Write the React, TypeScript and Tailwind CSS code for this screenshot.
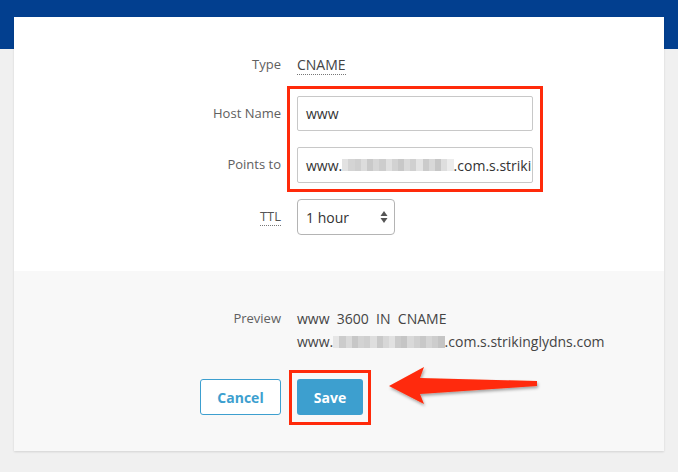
import React from "react";

const blurA = [
  "bg-[#e2e2e2]", "bg-[#d4d4d4]", "bg-[#cfcfcf]", "bg-[#dcdcdc]", "bg-[#c9c9c9]", "bg-[#d6d6d6]",
  "bg-[#cdcdcd]", "bg-[#e0e0e0]", "bg-[#d2d2d2]", "bg-[#c8c8c8]", "bg-[#dadada]", "bg-[#d0d0d0]",
  "bg-[#e4e4e4]", "bg-[#cbcbcb]", "bg-[#d8d8d8]", "bg-[#c6c6c6]", "bg-[#dedede]", "bg-[#ececec]",
];

const blurB = [
  "bg-[#e6e6e6]", "bg-[#cccccc]", "bg-[#dadada]", "bg-[#c7c7c7]", "bg-[#d3d3d3]", "bg-[#cfcfcf]",
  "bg-[#dedede]", "bg-[#c9c9c9]", "bg-[#d7d7d7]", "bg-[#e1e1e1]", "bg-[#cbcbcb]", "bg-[#c5c5c5]",
  "bg-[#d9d9d9]", "bg-[#d0d0d0]", "bg-[#c8c8c8]", "bg-[#d5d5d5]", "bg-[#cdcdcd]", "bg-[#c4c4c4]",
];

function Blur({ cells }: { cells: string[] }) {
  return (
    <span className="inline-flex h-[12px] align-[-1px]">
      {cells.map((c, i) => (
        <span key={i} className={`${c} h-full w-[6.2px]`} />
      ))}
    </span>
  );
}

function Label({ children }: { children: React.ReactNode }) {
  return <div className="w-[267px] shrink-0 text-right text-[13px] text-[#606060]">{children}</div>;
}

export default function App() {
  return (
    <div
      className="relative min-h-[472px] w-[678px] overflow-hidden bg-[#f0f0f0]"
      style={{ fontFamily: '"Open Sans", "Liberation Sans", sans-serif' }}
    >
      <div className="h-[49px] bg-[#023f8f]" />
      <div className="relative mx-[14px] -mt-[32px] bg-white shadow-[0_1px_2px_rgba(0,0,0,0.12)]">
        {/* form fields */}
        <div className="pt-[37px] pb-[36px]">
          <div className="flex h-[22px] items-center gap-4">
            <Label>Type</Label>
            <span className="border-b border-dotted border-[#777] text-[14px] leading-[18px] text-[#444]">CNAME</span>
          </div>

          <div className="relative mt-[20px]">
            <div className="pointer-events-none absolute left-[273px] top-[-10px] h-[106px] w-[256px] border-[3px] border-[#ff2a0a]" />
            <div className="flex items-center gap-4">
              <Label>Host Name</Label>
              <div className="flex h-[35px] w-[236px] items-center rounded-[2px] border border-[#c8c8c8] px-[8px] text-[14px] text-[#333]">
                www
              </div>
            </div>
            <div className="mt-[16px] flex items-center gap-4">
              <Label>Points to</Label>
              <div className="flex h-[36px] w-[236px] items-center overflow-hidden whitespace-nowrap rounded-[2px] border border-[#c8c8c8] px-[8px] text-[14px] text-[#333]">
                www.
                <Blur cells={blurA} />
                .com.s.strikinglydns.com
              </div>
            </div>
          </div>

          <div className="mt-[16px] flex items-center gap-4">
            <Label>
              <span className="border-b border-dotted border-[#777] text-[#555]">TTL</span>
            </Label>
            <div className="flex h-[36px] w-[98px] items-center justify-between rounded-[4px] border border-[#b4b4b4] pl-[8px] pr-[6px] text-[14px] text-[#333]">
              1 hour
              <svg width="8" height="14" viewBox="0 0 8 14">
                <path d="M4 1 L7.5 6 L0.5 6 Z" fill="#555" />
                <path d="M4 13 L7.5 8 L0.5 8 Z" fill="#555" />
              </svg>
            </div>
          </div>
        </div>

        {/* preview & actions */}
        <div className="bg-[#f8f8f8] pt-[36px] pb-[36px]">
          <div className="flex gap-4">
            <Label>
              <span className="leading-[23px]">Preview</span>
            </Label>
            <div className="text-[14px] leading-[23px] text-[#444]">
              <div className="whitespace-pre">www  3600  IN  CNAME</div>
              <div className="whitespace-nowrap">
                www.
                <Blur cells={blurB} />
                .com.s.strikinglydns.com
              </div>
            </div>
          </div>

          <div className="mt-[26px] flex gap-4 pl-[186px]">
            <button className="h-[36px] w-[81px] rounded-[3px] border border-[#3d9fcf] bg-white text-[14px] font-bold text-[#3d9fcf]">
              Cancel
            </button>
            <div className="relative">
              <div className="pointer-events-none absolute -left-[8px] -top-[9px] h-[55px] w-[82px] border-[3px] border-[#ff2a0a]" />
              <button className="h-[36px] w-[66px] rounded-[3px] bg-[#3d9fcf] text-[14px] font-bold text-white">
                Save
              </button>
            </div>
          </div>
        </div>
      </div>

      <svg className="pointer-events-none absolute left-0 top-0" width="678" height="472">
        <defs>
          <filter id="sh" x="-10%" y="-30%" width="130%" height="180%">
            <feDropShadow dx="1" dy="2" stdDeviation="1.5" floodColor="#000" floodOpacity="0.35" />
          </filter>
        </defs>
        <path
          d="M389 386 L424 367 L420 378 L537 381 L537 386 L420 394 L424 404 Z"
          fill="#ff2a0a"
          filter="url(#sh)"
        />
      </svg>
    </div>
  );
}
